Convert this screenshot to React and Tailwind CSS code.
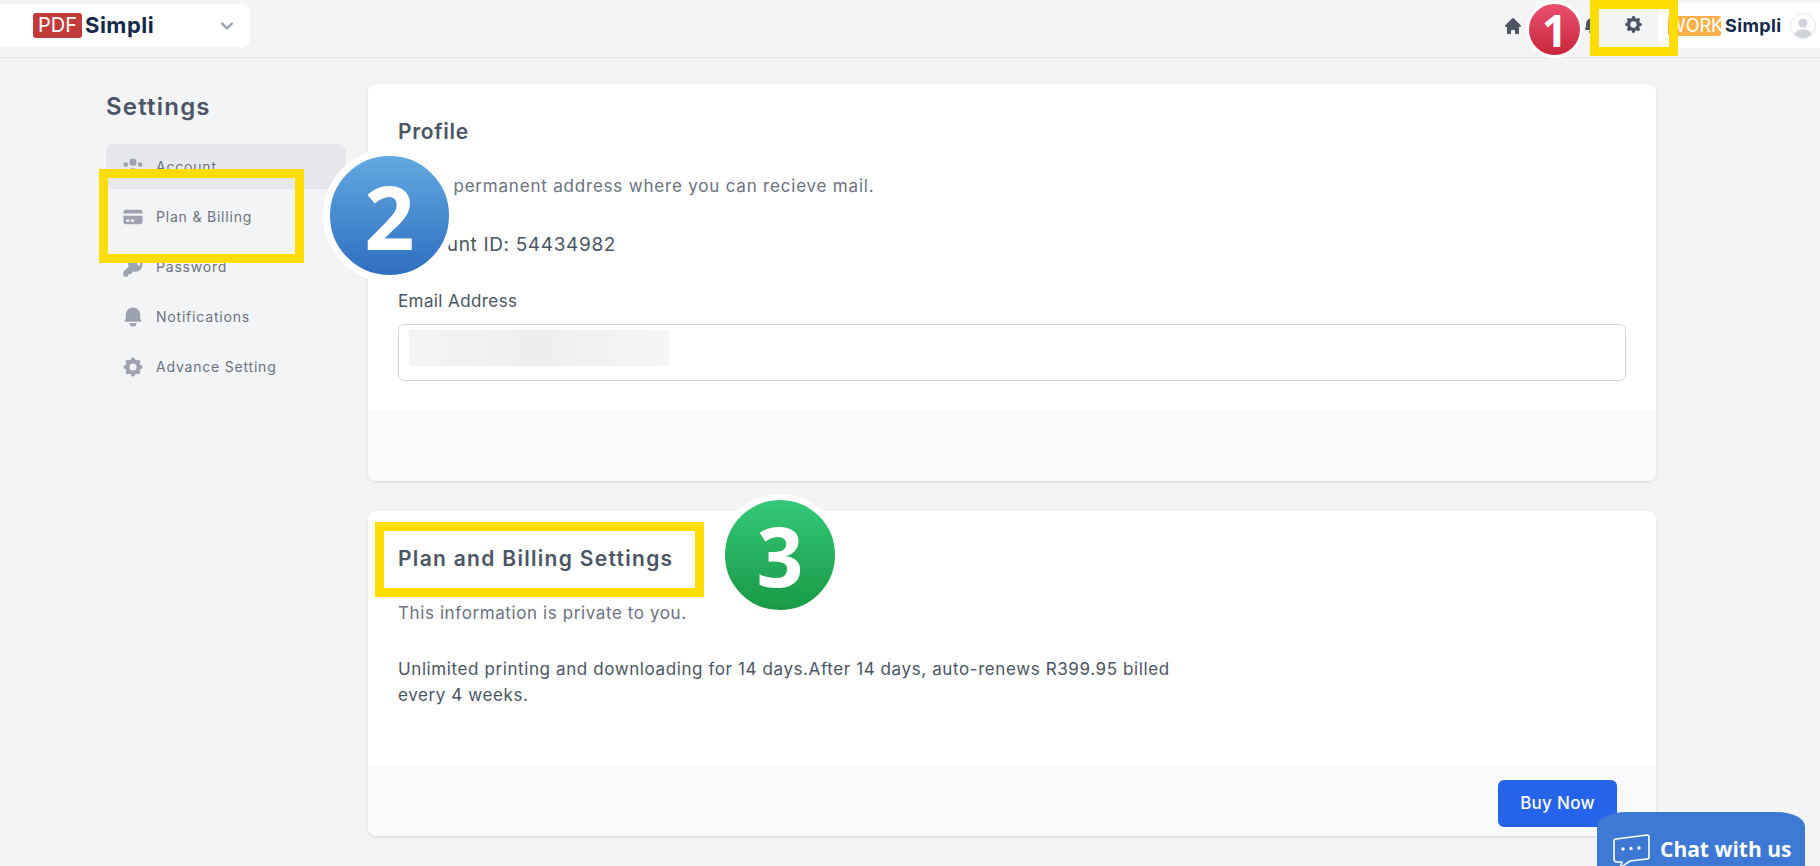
import React from "react";
import { HiHome, HiBell, HiCog, HiCreditCard, HiKey, HiUserGroup, HiChevronDown } from "react-icons/hi";

const font = "font-['Inter','Liberation_Sans',sans-serif]";

const NavItem = ({ icon: Icon, label, active }) => (
    <div className={`flex items-center h-[45px] mb-[5px] pl-[15px] rounded-lg ${active ? "bg-[#e5e7eb]" : ""}`}>
        <Icon className="w-[24px] h-[24px] text-[#9ca3af] mr-[11px] shrink-0" />
        <span className="text-[14px] tracking-[0.8px] text-[#6b7280]">{label}</span>
    </div>
);

const Badge = ({ className, children }) => (
    <div className={`absolute z-20 flex items-center justify-center rounded-full border-white text-white font-bold font-['Open_Sans',sans-serif] ${className}`}>
        {children}
    </div>
);

const App = () => {
    return (
        <div className={`relative w-[1820px] h-[866px] overflow-hidden bg-[#f3f4f6] ${font}`}>
            <header className="h-[58px] border-b border-[#e5e7eb] flex items-start justify-between">
                <div className="mt-[4px] w-[250px] h-[43px] bg-white rounded-r-lg flex items-center pl-[33px] pr-[11px]">
                    <span className="bg-[#c23b3b] text-white text-[20px] leading-[25px] h-[25px] w-[49px] text-center rounded-[3px]">PDF</span>
                    <span className="ml-[3px] text-[22px] tracking-[0.5px] font-bold text-[#14294a]">Simpli</span>
                    <HiChevronDown className="ml-auto w-[24px] h-[24px] text-[#9ca3af]" />
                </div>
                <div className="flex items-start">
                    <HiHome className="mt-[16px] w-[20px] h-[20px] text-[#4b5563] mr-[59px]" />
                    <HiBell className="mt-[16px] w-[20px] h-[20px] text-[#4b5563] mr-[21px]" />
                    <HiCog className="mt-[14px] w-[21px] h-[21px] text-[#4b5563] mr-[14px]" />
                    <div className="mt-[3px] w-[162px] h-[45px] bg-white rounded-l-lg flex items-center pl-[10px]">
                        <span className="bg-[#fbb04a] text-white text-[18px] leading-[20px] h-[20px] w-[53px] text-center rounded-[2px]">WORK</span>
                        <span className="ml-[4px] text-[18px] tracking-[0.4px] font-bold text-[#14294a]">Simpli</span>
                        <div className="ml-auto mr-[4px] w-[26px] h-[26px] rounded-full border border-[#e5e7eb] bg-white overflow-hidden">
                            <svg viewBox="0 0 24 24" className="w-full h-full" fill="#d1d5db">
                                <circle cx="12" cy="9" r="4.5" />
                                <path d="M2 24 C3 17 8 15.5 12 15.5 C16 15.5 21 17 22 24 Z" />
                            </svg>
                        </div>
                    </div>
                </div>
            </header>

            <main className="flex pl-[106px] pt-[27px] items-start">
                <aside className="w-[240px] shrink-0">
                    <h1 className="text-[24px] leading-[44px] font-semibold text-[#4b5563] mb-[15px] tracking-[1.2px]">Settings</h1>
                    <nav>
                        <NavItem icon={HiUserGroup} label="Account" active />
                        <NavItem icon={HiCreditCard} label="Plan & Billing" />
                        <NavItem icon={HiKey} label="Password" />
                        <NavItem icon={HiBell} label="Notifications" />
                        <NavItem icon={HiCog} label="Advance Setting" />
                    </nav>
                </aside>

                <div className="-mt-[1px] ml-[22px] w-[1288px]">
                    <section className="bg-white rounded-lg shadow overflow-hidden">
                        <div className="h-[326px] px-[30px] pt-[32px]">
                            <h2 className="text-[21px] leading-[32px] font-semibold tracking-[0.7px] text-[#4b5563]">Profile</h2>
                            <p className="mt-[26px] text-[17px] leading-[24px] tracking-[0.8px] text-[#6b7280]">Use a permanent address where you can recieve mail.</p>
                            <p className="mt-[33px] text-[19px] leading-[28px] tracking-[0.65px] text-[#4b5563]">Account ID: 54434982</p>
                            <label className="block mt-[30px] text-[17px] leading-[24px] tracking-[0.4px] text-[#4b5563]">Email Address</label>
                            <div className="mt-[11px] h-[57px] border border-[#d1d5db] rounded-md pl-[10px] pt-[5px]">
                                <div className="w-[260px] h-[36px] bg-gradient-to-r from-[#f4f4f4] via-[#eeeeee] to-[#f6f6f6]"></div>
                            </div>
                        </div>
                        <div className="h-[71px] bg-[#f9fafb]"></div>
                    </section>

                    <section className="mt-[30px] bg-white rounded-lg shadow overflow-hidden">
                        <div className="h-[255px] px-[30px] pt-[32px]">
                            <h2 className="text-[21px] leading-[32px] font-semibold tracking-[1.3px] text-[#4b5563]">Plan and Billing Settings</h2>
                            <p className="mt-[26px] text-[17px] leading-[24px] tracking-[0.6px] text-[#6b7280]">This information is private to you.</p>
                            <p className="mt-[31px] w-[790px] text-[17px] leading-[26px] tracking-[0.6px] text-[#4b5563]">
                                Unlimited printing and downloading for 14 days.After 14 days, auto-renews R399.95 billed every 4 weeks.
                            </p>
                        </div>
                        <div className="h-[70px] bg-[#f9fafb] flex items-center justify-end pr-[39px] pt-[5px]">
                            <button className="w-[119px] h-[47px] bg-[#2563eb] rounded-md text-white text-[17px] tracking-[0.3px] font-medium">Buy Now</button>
                        </div>
                    </section>
                </div>
            </main>

            {/* annotations on top of the screenshot */}
            <div className="absolute z-10 left-[1590px] top-0 w-[88px] h-[56px] border-[9px] border-[#ffdd00]"></div>
            <div className="absolute z-10 left-[99px] top-[169px] w-[205px] h-[94px] border-[9px] border-[#ffdd00]"></div>
            <div className="absolute z-10 left-[375px] top-[522px] w-[329px] h-[75px] border-[9px] border-[#ffdd00]"></div>

            <Badge className="left-[1526px] top-[1px] w-[57px] h-[57px] border-[3px] text-[44px] bg-gradient-to-b from-[#e8506e] to-[#c8243c]">1</Badge>
            <Badge className="left-[323px] top-[149px] w-[133px] h-[133px] border-[7px] text-[88px] bg-gradient-to-b from-[#62a8e0] to-[#2f6fc0]">2</Badge>
            <Badge className="left-[719px] top-[494px] w-[122px] h-[122px] border-[6px] text-[82px] bg-gradient-to-b from-[#33c878] to-[#199945]">3</Badge>

            <div className="absolute z-30 left-[1597px] top-[812px] w-[208px] h-[70px] bg-[#3d78d4] rounded-tl-[30px_14px] rounded-tr-[30px_14px] flex items-start pl-[15px] pt-[24px]">
                <svg width="40" height="36" viewBox="0 0 40 36" fill="none" stroke="white" strokeWidth="1.6" strokeLinejoin="round" className="shrink-0 -mt-[3px]">
                    <path d="M4 6 L35 2 Q37 2 37 4 L37 24 Q37 26 35 26 L18 28 L8 35 L10 29 L5 29 Q2 29 2 26 L2 8 Q2 6 4 6 Z" />
                    <circle cx="11" cy="16" r="1.7" fill="white" stroke="none" />
                    <circle cx="19" cy="15.5" r="1.7" fill="white" stroke="none" />
                    <circle cx="27" cy="15" r="1.7" fill="white" stroke="none" />
                </svg>
                <span className="ml-[8px] text-[21px] leading-[27px] font-bold text-white font-['Open_Sans',sans-serif]">Chat with us</span>
            </div>
        </div>
    );
};

export default App;
